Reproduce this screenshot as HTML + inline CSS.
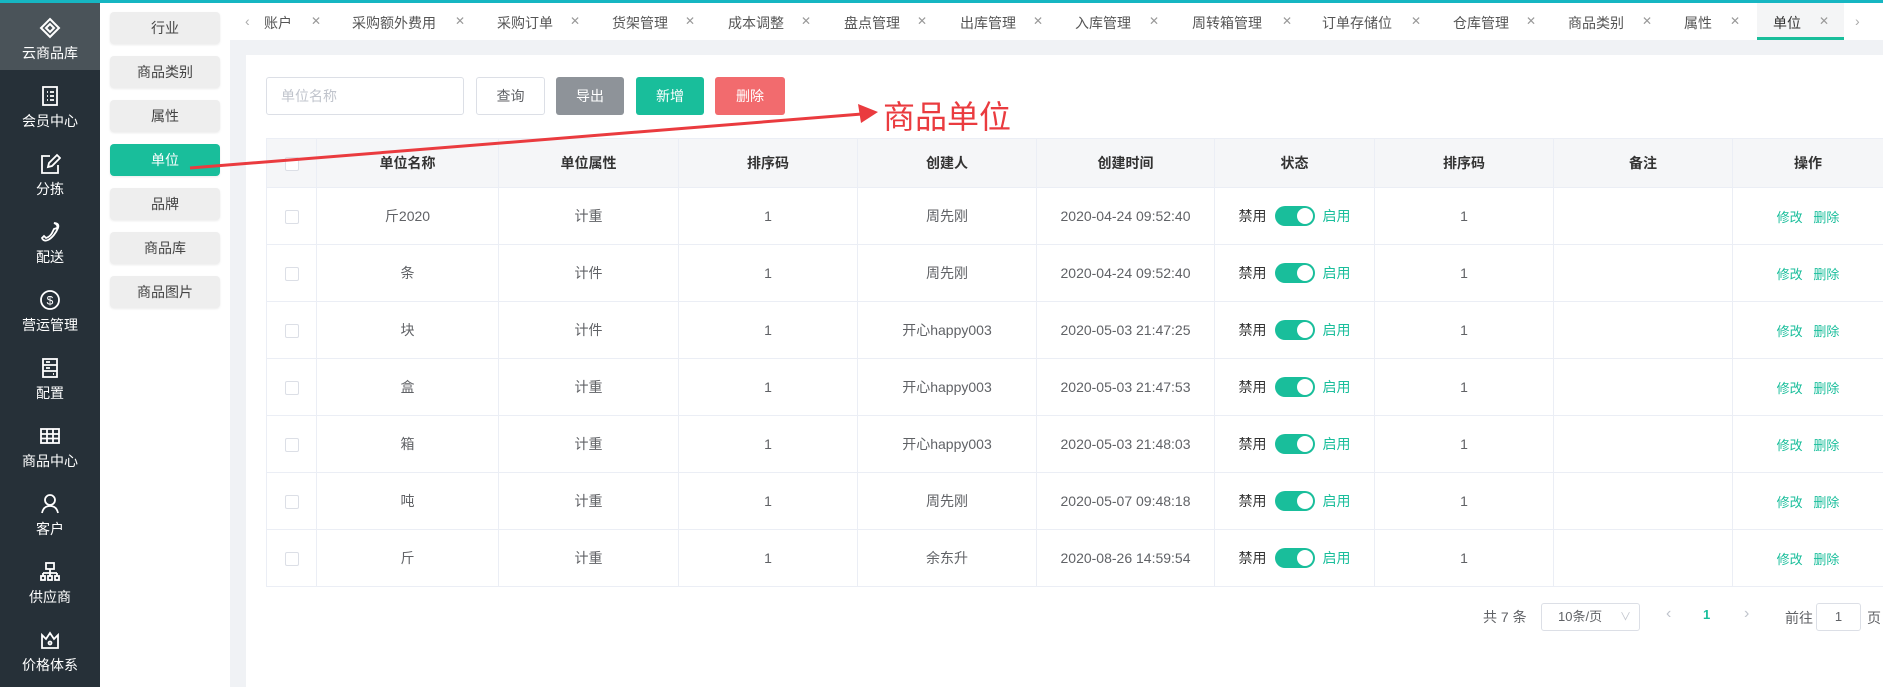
<!DOCTYPE html>
<html><head><meta charset="utf-8">
<style>
*{margin:0;padding:0;box-sizing:border-box}
body{width:1883px;height:687px;overflow:hidden;position:relative;background:#f0f2f5;font-family:"Liberation Sans","Noto Sans CJK SC",sans-serif;font-size:14px;color:#606266}
.abs{position:absolute}
#topline{left:0;top:0;width:1883px;height:3px;background:#16b6c2;z-index:5}
#side{left:0;top:0;width:100px;height:687px;background:#263038}
#side .act{position:absolute;left:0;top:0;width:100px;height:70px;background:#4a5359}
.si{position:absolute;left:0;width:100px;text-align:center;color:#fff;font-size:14px}
.si svg{display:block;margin:0 auto 4px}
#sub{left:100px;top:0;width:130px;height:687px;background:#fff}
.sb{position:absolute;left:110px;width:110px;height:32px;line-height:32px;text-align:center;background:#eeeeee;border-radius:4px;color:#444;font-size:14px;box-shadow:0 1px 2px rgba(0,0,0,.08)}
.sb.on{background:#19be9b;color:#fff}
#tabs{left:230px;top:3px;width:1653px;height:37px;background:#fff}
.tab{position:absolute;top:13px;font-size:14px;color:#555;white-space:nowrap}
.x{position:absolute;top:14px;font-size:12px;color:#999}
#card{left:246px;top:55px;width:1637px;height:632px;background:#fff}
.btn{position:absolute;top:77px;height:38px;line-height:38px;text-align:center;border-radius:3px;font-size:14px;color:#fff}
table{position:absolute;left:266px;top:138px;border-collapse:collapse;table-layout:fixed;width:1617px}
td,th{border:1px solid #ebeef5;text-align:center;font-size:14px;color:#606266;font-weight:normal}
th{height:49px;background:#f5f6f8;color:#333;font-weight:bold}
td{height:57px}
.cb{display:inline-block;width:14px;height:14px;border:1px solid #dcdfe6;border-radius:2px;vertical-align:middle;background:#fff}
.st{display:flex;align-items:center;justify-content:center}
.tg{display:inline-block;width:40px;height:20px;border-radius:10px;background:#19be9b;position:relative;margin:0 8px}
.tg:after{content:"";position:absolute;right:2px;top:2px;width:16px;height:16px;border-radius:50%;background:#fff}
.g{color:#19be9b}
.op{color:#19be9b;font-size:13px}
</style></head><body>
<div id="topline" class="abs"></div>
<div id="side" class="abs"><div class="act"></div>
<div class="si" style="top:17px"><svg width="22" height="22" viewBox="0 0 22 22" fill="none" stroke="#fff" stroke-width="2"><path d="M11 2 L20 11 L11 20 L2 11Z"/><path d="M7 11 L11 7 L15 11 L11 15Z"/></svg>云商品库</div>
<div class="si" style="top:85px"><svg width="22" height="22" viewBox="0 0 22 22" fill="none" stroke="#fff" stroke-width="1.8"><rect x="4" y="2" width="14" height="18"/><path d="M8 7h1M11 7h4M8 11h1M11 11h4M8 15h1M11 15h4"/></svg>会员中心</div>
<div class="si" style="top:153px"><svg width="22" height="22" viewBox="0 0 22 22" fill="none" stroke="#fff" stroke-width="1.8"><path d="M11 3H3v17h16v-8"/><path d="M9 14l1-4 8-8 3 3-8 8z"/></svg>分拣</div>
<div class="si" style="top:221px"><svg width="22" height="22" viewBox="0 0 22 22" fill="none" stroke="#fff" stroke-width="1.8"><path d="M15 2c3 1 4 3 3 5l-3 1-2 4c-1 2-3 4-6 5l-2-2-2 2c1 3 4 3 6 2 4-2 8-7 10-12 1-3 0-5-4-5z"/></svg>配送</div>
<div class="si" style="top:289px"><svg width="22" height="22" viewBox="0 0 22 22" fill="none" stroke="#fff" stroke-width="1.8"><circle cx="11" cy="11" r="9"/><text x="11" y="15.5" font-size="12" fill="#fff" stroke="none" text-anchor="middle" font-family="Liberation Sans">$</text></svg>营运管理</div>
<div class="si" style="top:357px"><svg width="22" height="22" viewBox="0 0 22 22" fill="none" stroke="#fff" stroke-width="1.8"><rect x="4" y="2" width="14" height="18"/><path d="M4 8h14M4 14h14M7 5h4M7 11h4M14 17h1"/></svg>配置</div>
<div class="si" style="top:425px"><svg width="22" height="22" viewBox="0 0 22 22" fill="none" stroke="#fff" stroke-width="1.8"><rect x="2" y="4" width="18" height="14"/><path d="M2 9h18M2 13.5h18M8 4v14M14 4v14"/></svg>商品中心</div>
<div class="si" style="top:493px"><svg width="22" height="22" viewBox="0 0 22 22" fill="none" stroke="#fff" stroke-width="1.8"><circle cx="11" cy="7" r="5"/><path d="M3 20c1-5 4-7 8-7s7 2 8 7"/></svg>客户</div>
<div class="si" style="top:561px"><svg width="22" height="22" viewBox="0 0 22 22" fill="none" stroke="#fff" stroke-width="1.8"><rect x="7" y="2" width="8" height="6"/><path d="M11 8v4M4 12h14M4 12v3M11 12v3M18 12v3"/><rect x="2" y="15" width="4" height="4"/><rect x="9" y="15" width="4" height="4"/><rect x="16" y="15" width="4" height="4"/></svg>供应商</div>
<div class="si" style="top:629px"><svg width="22" height="22" viewBox="0 0 22 22" fill="none" stroke="#fff" stroke-width="1.8"><path d="M3 6l4 4 4-6 4 6 4-4v13H3z"/><circle cx="11" cy="14" r="1.5"/></svg>价格体系</div>
</div>
<div id="sub" class="abs"></div>
<div class="sb" style="top:12px">行业</div>
<div class="sb" style="top:56px">商品类别</div>
<div class="sb" style="top:100px">属性</div>
<div class="sb on" style="top:144px">单位</div>
<div class="sb" style="top:188px">品牌</div>
<div class="sb" style="top:232px">商品库</div>
<div class="sb" style="top:276px">商品图片</div>

<div id="tabs" class="abs"></div>
<div class="abs" style="left:1757px;top:3px;width:87px;height:37px;background:#f4f5f6;border-bottom:3px solid #19be9b"></div>
<div class="tab" style="left:245px;color:#aaa">&lsaquo;</div>
<div class="tab" style="left:264px">账户</div><div class="x" style="left:311px">✕</div>
<div class="tab" style="left:352px">采购额外费用</div><div class="x" style="left:455px">✕</div>
<div class="tab" style="left:497px">采购订单</div><div class="x" style="left:570px">✕</div>
<div class="tab" style="left:612px">货架管理</div><div class="x" style="left:685px">✕</div>
<div class="tab" style="left:728px">成本调整</div><div class="x" style="left:801px">✕</div>
<div class="tab" style="left:844px">盘点管理</div><div class="x" style="left:917px">✕</div>
<div class="tab" style="left:960px">出库管理</div><div class="x" style="left:1033px">✕</div>
<div class="tab" style="left:1075px">入库管理</div><div class="x" style="left:1149px">✕</div>
<div class="tab" style="left:1192px">周转箱管理</div><div class="x" style="left:1282px">✕</div>
<div class="tab" style="left:1322px">订单存储位</div><div class="x" style="left:1411px">✕</div>
<div class="tab" style="left:1453px">仓库管理</div><div class="x" style="left:1526px">✕</div>
<div class="tab" style="left:1568px">商品类别</div><div class="x" style="left:1642px">✕</div>
<div class="tab" style="left:1684px">属性</div><div class="x" style="left:1730px">✕</div>
<div class="tab" style="left:1773px;color:#333">单位</div><div class="x" style="left:1819px">✕</div>
<div class="tab" style="left:1855px;color:#aaa">&rsaquo;</div>

<div id="card" class="abs"></div>
<div class="abs" style="left:266px;top:77px;width:198px;height:38px;border:1px solid #dcdfe6;border-radius:3px;line-height:36px;padding-left:14px;color:#c0c4cc;font-size:14px">单位名称</div>
<div class="btn" style="left:476px;width:69px;border:1px solid #dcdfe6;color:#606266;line-height:36px">查询</div>
<div class="btn" style="left:556px;width:68px;background:#8e9399">导出</div>
<div class="btn" style="left:636px;width:68px;background:#19be9b">新增</div>
<div class="btn" style="left:715px;width:70px;background:#f26b6e">删除</div>

<table>
<colgroup><col style="width:50px"><col style="width:182px"><col style="width:180px"><col style="width:179px"><col style="width:179px"><col style="width:178px"><col style="width:160px"><col style="width:179px"><col style="width:179px"><col style="width:151px"></colgroup>
<tr><th><span class="cb"></span></th><th>单位名称</th><th>单位属性</th><th>排序码</th><th>创建人</th><th>创建时间</th><th>状态</th><th>排序码</th><th>备注</th><th>操作</th></tr>
<tr><td><span class="cb"></span></td><td>斤2020</td><td>计重</td><td>1</td><td>周先刚</td><td>2020-04-24 09:52:40</td><td><div class="st"><span style="color:#333">禁用</span><span class="tg"></span><span class="g">启用</span></div></td><td>1</td><td></td><td><span class="op">修改&nbsp;&nbsp;&nbsp;删除</span></td></tr>
<tr><td><span class="cb"></span></td><td>条</td><td>计件</td><td>1</td><td>周先刚</td><td>2020-04-24 09:52:40</td><td><div class="st"><span style="color:#333">禁用</span><span class="tg"></span><span class="g">启用</span></div></td><td>1</td><td></td><td><span class="op">修改&nbsp;&nbsp;&nbsp;删除</span></td></tr>
<tr><td><span class="cb"></span></td><td>块</td><td>计件</td><td>1</td><td>开心happy003</td><td>2020-05-03 21:47:25</td><td><div class="st"><span style="color:#333">禁用</span><span class="tg"></span><span class="g">启用</span></div></td><td>1</td><td></td><td><span class="op">修改&nbsp;&nbsp;&nbsp;删除</span></td></tr>
<tr><td><span class="cb"></span></td><td>盒</td><td>计重</td><td>1</td><td>开心happy003</td><td>2020-05-03 21:47:53</td><td><div class="st"><span style="color:#333">禁用</span><span class="tg"></span><span class="g">启用</span></div></td><td>1</td><td></td><td><span class="op">修改&nbsp;&nbsp;&nbsp;删除</span></td></tr>
<tr><td><span class="cb"></span></td><td>箱</td><td>计重</td><td>1</td><td>开心happy003</td><td>2020-05-03 21:48:03</td><td><div class="st"><span style="color:#333">禁用</span><span class="tg"></span><span class="g">启用</span></div></td><td>1</td><td></td><td><span class="op">修改&nbsp;&nbsp;&nbsp;删除</span></td></tr>
<tr><td><span class="cb"></span></td><td>吨</td><td>计重</td><td>1</td><td>周先刚</td><td>2020-05-07 09:48:18</td><td><div class="st"><span style="color:#333">禁用</span><span class="tg"></span><span class="g">启用</span></div></td><td>1</td><td></td><td><span class="op">修改&nbsp;&nbsp;&nbsp;删除</span></td></tr>
<tr><td><span class="cb"></span></td><td>斤</td><td>计重</td><td>1</td><td>余东升</td><td>2020-08-26 14:59:54</td><td><div class="st"><span style="color:#333">禁用</span><span class="tg"></span><span class="g">启用</span></div></td><td>1</td><td></td><td><span class="op">修改&nbsp;&nbsp;&nbsp;删除</span></td></tr>
</table>

<div class="abs" style="left:1483px;top:607px;font-size:14px">共 7 条</div>
<div class="abs" style="left:1541px;top:603px;width:99px;height:28px;border:1px solid #dcdfe6;border-radius:3px;line-height:26px;padding-left:16px;font-size:13px">10条/页<span style="position:absolute;right:8px;color:#c0c4cc;font-size:11px">∨</span></div>
<div class="abs" style="left:1666px;top:605px;color:#c0c4cc;font-size:16px">&lsaquo;</div>
<div class="abs" style="left:1703px;top:607px;color:#19be9b;font-weight:bold;font-size:13px">1</div>
<div class="abs" style="left:1744px;top:605px;color:#c0c4cc;font-size:16px">&rsaquo;</div>
<div class="abs" style="left:1785px;top:608px;font-size:14px">前往</div>
<div class="abs" style="left:1816px;top:603px;width:45px;height:28px;border:1px solid #dcdfe6;border-radius:3px;text-align:center;line-height:26px;font-size:13px">1</div>
<div class="abs" style="left:1867px;top:608px;font-size:14px">页</div>

<svg class="abs" style="left:0;top:0" width="1883" height="687">
<line x1="190" y1="168" x2="862" y2="114" stroke="#ea3b3f" stroke-width="3"/>
<polygon points="878,112 858,104 861,123" fill="#ea3b3f"/>
</svg>
<div class="abs" style="left:883px;top:92px;color:#ea3b3f;font-size:32px;white-space:nowrap">商品单位</div>
</body></html>
